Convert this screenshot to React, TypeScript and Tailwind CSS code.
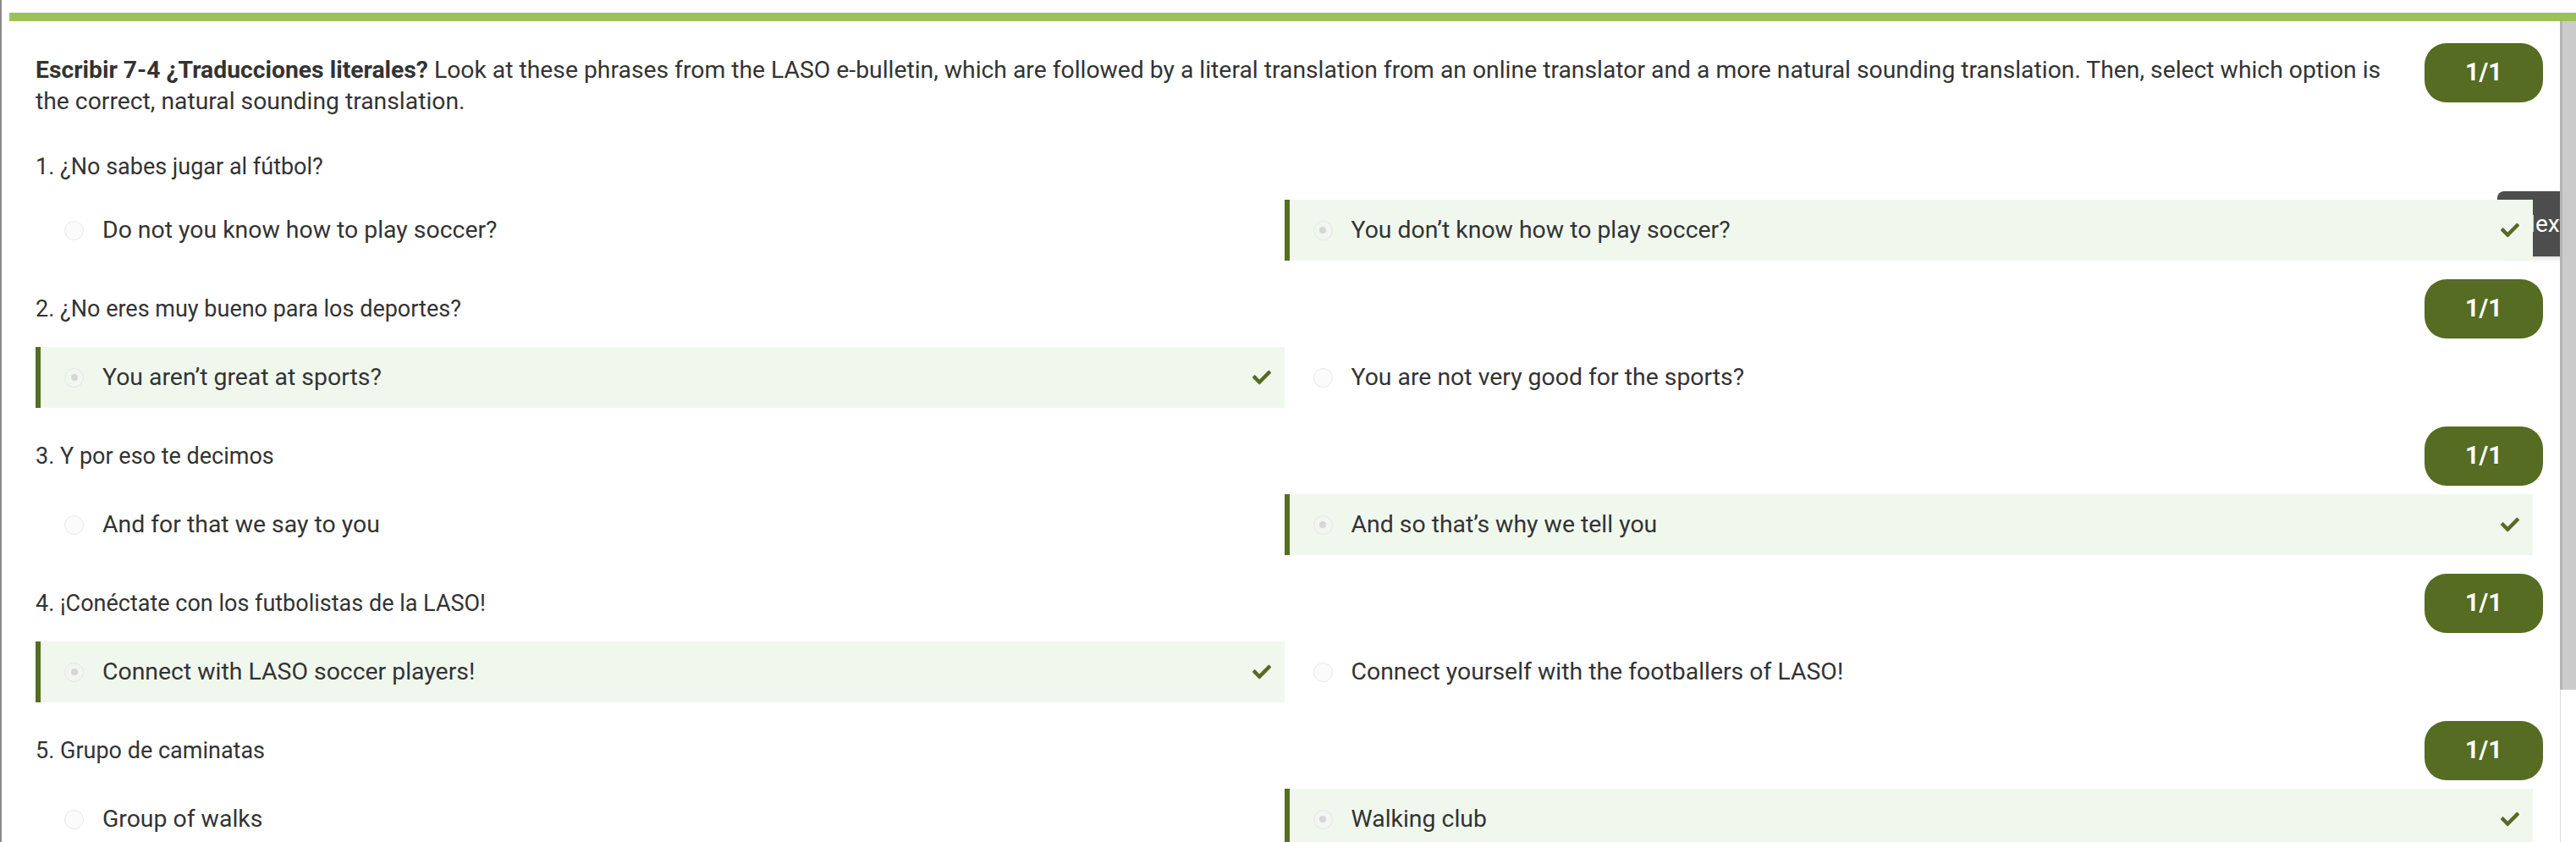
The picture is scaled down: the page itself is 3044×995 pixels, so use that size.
import { FaCheck } from "react-icons/fa";

type Question = {
  label: string;
  options: [string, string];
  picked: 0 | 1;
};

const questions: Question[] = [
  {
    label: "1. ¿No sabes jugar al fútbol?",
    options: ["Do not you know how to play soccer?", "You don’t know how to play soccer?"],
    picked: 1,
  },
  {
    label: "2. ¿No eres muy bueno para los deportes?",
    options: ["You aren’t great at sports?", "You are not very good for the sports?"],
    picked: 0,
  },
  {
    label: "3. Y por eso te decimos",
    options: ["And for that we say to you", "And so that’s why we tell you"],
    picked: 1,
  },
  {
    label: "4. ¡Conéctate con los futbolistas de la LASO!",
    options: ["Connect with LASO soccer players!", "Connect yourself with the footballers of LASO!"],
    picked: 0,
  },
  {
    label: "5. Grupo de caminatas",
    options: ["Group of walks", "Walking club"],
    picked: 1,
  },
];

function Score() {
  return (
    <div className="flex h-[70px] w-[140px] shrink-0 items-center justify-center rounded-[26px] bg-[#556c22] text-[29px] font-bold text-white">
      1/1
    </div>
  );
}

function Option({ text, picked }: { text: string; picked: boolean }) {
  return (
    <div
      className={`relative z-10 flex h-[72px] items-center border-l-[6px] pl-[28px] pr-[16px] ${
        picked ? "border-[#546e22] bg-[#f0f8ee]" : "border-transparent"
      }`}
    >
      <span
        className={`flex h-[23px] w-[23px] shrink-0 items-center justify-center rounded-full border ${
          picked ? "border-[#e3e6e3] bg-[#f3f5f3]" : "border-[#e8e8e8] bg-[#fbfbfb]"
        }`}
      >
        {picked && <span className="h-[8px] w-[8px] rounded-full bg-[#d4d7d4]" />}
      </span>
      <span className="ml-[22px] text-[28.4px] text-[#333]">{text}</span>
      {picked && <FaCheck className="ml-auto h-[22px] w-[22px] text-[#556c22]" />}
    </div>
  );
}

function Options({ q }: { q: Question }) {
  return (
    <div className="mr-[12px] grid grid-cols-2">
      <Option text={q.options[0]} picked={q.picked === 0} />
      <Option text={q.options[1]} picked={q.picked === 1} />
    </div>
  );
}

export default function App() {
  return (
    <div className="h-[995px] w-[3044px] overflow-hidden bg-white font-['Roboto','Liberation_Sans',sans-serif] text-[#333]">
      <div className="flex h-full">
        <div className="w-[2px] bg-[#8a8a8a]" />
        <div className="flex min-w-0 flex-1 flex-col">
          <div className="ml-[9px] mt-[15px] h-[10px] bg-[#9bc257]" />
          <div className="flex min-h-0 flex-1">
            <main className="relative flex-1 overflow-hidden pl-[40px] pr-[20px]">
              {/* Next tab, peeking out from behind the first answer */}
              <div className="absolute left-[2949px] top-[201px] z-0 flex h-[77px] w-[120px] items-center rounded-l-[8px] bg-[#4d4d4d] pl-[25px] text-[28px] text-white shadow-md">
                Next
              </div>

              <div className="mt-[26px] flex items-start">
                <p className="mt-[13px] flex-1 pr-[20px] text-[28.3px] leading-[37px]">
                  <b>Escribir 7-4 ¿Traducciones literales?</b> Look at these phrases from the LASO
                  e-bulletin, which are followed by a literal translation from an online translator and a
                  more natural sounding translation. Then, select which option is the correct, natural
                  sounding translation.
                </p>
                <Score />
              </div>

              <div className="mt-[40px] text-[27px] leading-[38px]">{questions[0].label}</div>
              <div className="mt-[20px]">
                <Options q={questions[0]} />
              </div>

              {questions.slice(1).map((q) => (
                <div key={q.label}>
                  <div className="mt-[22px] flex h-[70px] items-center justify-between">
                    <span className="text-[27px]">{q.label}</span>
                    <Score />
                  </div>
                  <div className="mt-[10px]">
                    <Options q={q} />
                  </div>
                </div>
              ))}
            </main>

            {/* scrollbar */}
            <div className="flex w-[19px] flex-col">
              <div className="h-[790px] border-l-[3px] border-[#b4b4b4] bg-[#cbcbcb]" />
              <div className="flex-1 border-l border-[#dcdcdc] bg-white" />
            </div>
          </div>
        </div>
      </div>
    </div>
  );
}
